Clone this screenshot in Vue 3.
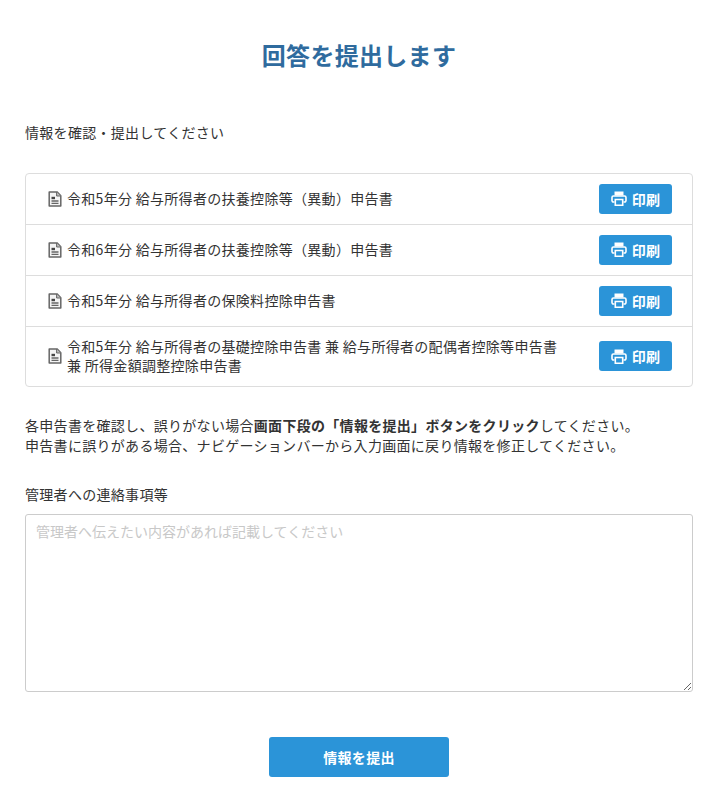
<script setup>
const docs = [
  { id: 1, lines: ['令和5年分 給与所得者の扶養控除等（異動）申告書'] },
  { id: 2, lines: ['令和6年分 給与所得者の扶養控除等（異動）申告書'] },
  { id: 3, lines: ['令和5年分 給与所得者の保険料控除申告書'] },
  { id: 4, lines: ['令和5年分 給与所得者の基礎控除申告書 兼 給与所得者の配偶者控除等申告書', '兼 所得金額調整控除申告書'] },
]
</script>

<template>
  <main class="page">
    <h1 class="title">回答を提出します</h1>
    <p class="lead">情報を確認・提出してください</p>

    <ul class="doc-list">
      <li v-for="doc in docs" :key="doc.id" class="doc-row">
        <svg class="doc-icon" viewBox="0 0 14 16" width="14" height="16" aria-hidden="true">
          <path d="M1.2 .9h7.800L12.800 4.700V15.100H1.200z" fill="#f4f4f4" stroke="#666" stroke-width="1.500" stroke-linejoin="round" />
          <path d="M8.600 1v4h4" fill="#bbb" stroke="#666" stroke-width="1" />
          <path d="M3.500 5.800h3.500v2.400H3.500z" fill="#444" />
          <path d="M3.500 10h7M3.500 12.400h7" stroke="#666" stroke-width="1.400" />
        </svg>
        <div class="doc-name">
          <div v-for="line in doc.lines" :key="line">{{ line }}</div>
        </div>
        <button class="print-btn" type="button">
          <svg viewBox="0 0 16 15" width="16" height="15" aria-hidden="true">
            <path d="M3.500 4.500V.5h9v4z" fill="#fff" />
            <path d="M3.500 11H2.400A1.400 1.400 0 0 1 1 9.600V6.400A1.400 1.400 0 0 1 2.400 5h11.200A1.400 1.400 0 0 1 15 6.400v3.200a1.400 1.400 0 0 1-1.400 1.400h-1.100" fill="none" stroke="#fff" stroke-width="1.600" />
            <path d="M4.300 8.500h7.400v5.700H4.300z" fill="none" stroke="#fff" stroke-width="1.600" />
          </svg>
          <span>印刷</span>
        </button>
      </li>
    </ul>

    <p class="note">
      各申告書を確認し、誤りがない場合<strong>画面下段の「情報を提出」ボタンをクリック</strong>してください。<br />
      申告書に誤りがある場合、ナビゲーションバーから入力画面に戻り情報を修正してください。
    </p>

    <label class="field-label" for="message">管理者への連絡事項等</label>
    <textarea id="message" class="message" placeholder="管理者へ伝えたい内容があれば記載してください"></textarea>

    <div class="actions">
      <button class="submit-btn" type="button">情報を提出</button>
    </div>
  </main>
</template>

<style>
html, body {
  background: #fff;
}
</style>

<style scoped>
.page {
  box-sizing: border-box;
  width: 718px;
  padding: 39px 25px 13px;
  font-family: "Noto Sans CJK JP", "Noto Sans", sans-serif;
  font-size: 14px;
  line-height: 19.6px;
  letter-spacing: 0.3px;
  color: #333;
}
.title {
  margin: 0;
  text-align: center;
  font-size: 24px;
  line-height: 32px;
  font-weight: 700;
  color: #2f6b9e;
}
.lead {
  margin: 52px 0 0;
}
.doc-list {
  list-style: none;
  margin: 30px 0 0;
  padding: 0;
  border: 1px solid #ddd;
  border-radius: 4px;
}
.doc-row {
  display: flex;
  align-items: center;
  min-height: 51px;
  padding: 10px 20px 10px 22px;
  box-sizing: border-box;
  border-bottom: 1px solid #ddd;
}
.doc-row:last-child {
  border-bottom: 0;
}
.doc-icon {
  flex: none;
  margin-right: 5px;
}
.doc-name {
  flex: 1;
}
.print-btn {
  flex: none;
  display: flex;
  align-items: center;
  justify-content: center;
  gap: 5px;
  width: 73px;
  height: 30px;
  padding: 0;
  border: 0;
  border-radius: 3px;
  background: #2b94d8;
  color: #fff;
  font: 700 14px "Noto Sans CJK JP", sans-serif;
  letter-spacing: 0.3px;
}
.note {
  margin: 29.6px 0 0;
}
.note strong {
  font-weight: 700;
}
.field-label {
  display: block;
  margin-top: 29.4px;
}
.message {
  display: block;
  box-sizing: border-box;
  width: 100%;
  height: 178px;
  margin-top: 9px;
  padding: 6px 10px;
  border: 1px solid #ccc;
  border-radius: 3px;
  font: 14px/20px "Noto Sans CJK JP", sans-serif;
  color: #333;
}
.message::placeholder {
  color: #c8c8c8;
}
.actions {
  display: flex;
  justify-content: center;
  margin-top: 45px;
}
.submit-btn {
  width: 180px;
  height: 40px;
  border: 0;
  border-radius: 3px;
  background: #2b94d8;
  color: #fff;
  font: 700 14px "Noto Sans CJK JP", sans-serif;
  letter-spacing: 0.3px;
}
</style>
